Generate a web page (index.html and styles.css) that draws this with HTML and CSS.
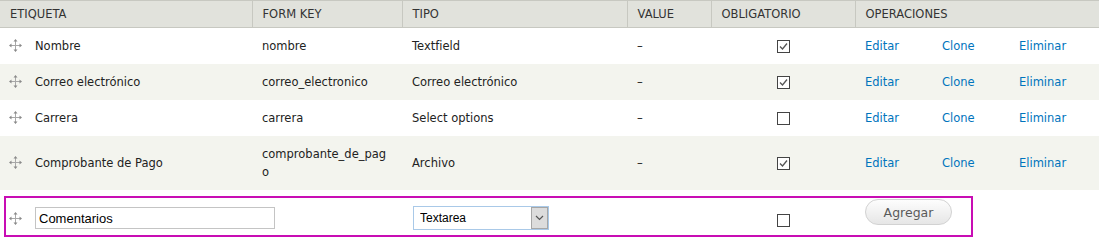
FILE: index.html
```html
<!DOCTYPE html>
<html lang="es">
<head>
<meta charset="utf-8">
<title>Campos del formulario</title>
<link rel="stylesheet" href="styles.css">
</head>
<body>
<div class="page">
  <table class="fields">
    <colgroup>
      <col class="c-label"><col class="c-key"><col class="c-type"><col class="c-value"><col class="c-req"><col class="c-ops">
    </colgroup>
    <thead>
      <tr><th>Etiqueta</th><th>Form key</th><th>Tipo</th><th>Value</th><th>Obligatorio</th><th>Operaciones</th></tr>
    </thead>
    <tbody>
      <tr class="odd">
        <td><span class="handle"><svg width="13" height="13" viewBox="0 0 13 13"><path d="M6.5 2V11M2 6.5H11" stroke="#a8a8a8" stroke-width="1"/><path d="M6.5 0L4.5 2.5H8.5ZM6.5 13L4.5 10.5H8.5ZM0 6.5L2.5 4.5V8.5ZM13 6.5L10.5 4.5V8.5Z" fill="#8a8a8a"/></svg></span>Nombre</td>
        <td class="key">nombre</td>
        <td>Textfield</td>
        <td>–</td>
        <td class="req"><span class="cb"><svg width="11" height="11" viewBox="0 0 11 11"><path d="M2 5.5L4.5 8L9 2.5" fill="none" stroke="#555" stroke-width="1.3"/></svg></span></td>
        <td><div class="ops"><a href="#">Editar</a><a href="#">Clone</a><a href="#">Eliminar</a></div></td>
      </tr>
      <tr class="even">
        <td><span class="handle"><svg width="13" height="13" viewBox="0 0 13 13"><path d="M6.5 2V11M2 6.5H11" stroke="#a8a8a8" stroke-width="1"/><path d="M6.5 0L4.5 2.5H8.5ZM6.5 13L4.5 10.5H8.5ZM0 6.5L2.5 4.5V8.5ZM13 6.5L10.5 4.5V8.5Z" fill="#8a8a8a"/></svg></span>Correo electrónico</td>
        <td class="key">correo_electronico</td>
        <td>Correo electrónico</td>
        <td>–</td>
        <td class="req"><span class="cb"><svg width="11" height="11" viewBox="0 0 11 11"><path d="M2 5.5L4.5 8L9 2.5" fill="none" stroke="#555" stroke-width="1.3"/></svg></span></td>
        <td><div class="ops"><a href="#">Editar</a><a href="#">Clone</a><a href="#">Eliminar</a></div></td>
      </tr>
      <tr class="odd">
        <td><span class="handle"><svg width="13" height="13" viewBox="0 0 13 13"><path d="M6.5 2V11M2 6.5H11" stroke="#a8a8a8" stroke-width="1"/><path d="M6.5 0L4.5 2.5H8.5ZM6.5 13L4.5 10.5H8.5ZM0 6.5L2.5 4.5V8.5ZM13 6.5L10.5 4.5V8.5Z" fill="#8a8a8a"/></svg></span>Carrera</td>
        <td class="key">carrera</td>
        <td>Select options</td>
        <td>–</td>
        <td class="req"><span class="cb"></span></td>
        <td><div class="ops"><a href="#">Editar</a><a href="#">Clone</a><a href="#">Eliminar</a></div></td>
      </tr>
      <tr class="even">
        <td><span class="handle"><svg width="13" height="13" viewBox="0 0 13 13"><path d="M6.5 2V11M2 6.5H11" stroke="#a8a8a8" stroke-width="1"/><path d="M6.5 0L4.5 2.5H8.5ZM6.5 13L4.5 10.5H8.5ZM0 6.5L2.5 4.5V8.5ZM13 6.5L10.5 4.5V8.5Z" fill="#8a8a8a"/></svg></span>Comprobante de Pago</td>
        <td class="key">comprobante_de_pago</td>
        <td>Archivo</td>
        <td>–</td>
        <td class="req"><span class="cb"><svg width="11" height="11" viewBox="0 0 11 11"><path d="M2 5.5L4.5 8L9 2.5" fill="none" stroke="#555" stroke-width="1.3"/></svg></span></td>
        <td><div class="ops"><a href="#">Editar</a><a href="#">Clone</a><a href="#">Eliminar</a></div></td>
      </tr>
      <tr class="add">
        <td class="add-label"><div class="add-flex"><span class="handle"><svg width="13" height="13" viewBox="0 0 13 13"><path d="M6.5 2V11M2 6.5H11" stroke="#a8a8a8" stroke-width="1"/><path d="M6.5 0L4.5 2.5H8.5ZM6.5 13L4.5 10.5H8.5ZM0 6.5L2.5 4.5V8.5ZM13 6.5L10.5 4.5V8.5Z" fill="#8a8a8a"/></svg></span><input class="text-input" type="text" value="Comentarios"></div></td>
        <td class="add-key"></td>
        <td class="add-type"><div class="select-wrap"><select class="select"><option>Textarea</option></select><span class="select-btn"><svg width="9" height="6" viewBox="0 0 9 6"><path d="M1 1L4.5 4.5L8 1" fill="none" stroke="#555" stroke-width="1.2"/></svg></span></div></td>
        <td class="add-value"></td>
        <td class="req add-req"><span class="cb"></span></td>
        <td class="add-ops"><button class="btn" type="button">Agregar</button></td>
      </tr>
    </tbody>
  </table>
  <div class="highlight"></div>
</div>
</body>
</html>
```
FILE: styles.css
```css
html, body {
  margin: 0;
  padding: 0;
  background: #fff;
}

.page {
  position: relative;
  width: 1099px;
  font-family: "DejaVu Sans", Verdana, sans-serif;
  color: #333;
}

.fields {
  width: 1099px;
  border-collapse: collapse;
  table-layout: fixed;
  font-size: 11.5px;
  line-height: 18px;
}

.c-label { width: 252px; }
.c-key { width: 150px; }
.c-type { width: 225px; }
.c-value { width: 84px; }
.c-req { width: 144px; }
.c-ops { width: 244px; }

.fields th {
  background: #e1e2dc;
  border-top: 1px solid #c7c8c1;
  border-bottom: 1px solid #c7c8c1;
  border-left: 1px solid #c7c8c1;
  padding: 4px 10px;
  text-align: left;
  font-weight: normal;
  text-transform: uppercase;
  color: #333;
}

.fields th:first-child {
  border-left: none;
}

.fields td {
  padding: 9px 10px;
  vertical-align: middle;
  color: #222;
}

.fields tr.even td {
  background: #f3f4ee;
}

.key {
  word-break: break-all;
}

.handle {
  display: inline-block;
  flex: none;
  width: 13px;
  height: 13px;
  margin-left: -1px;
  margin-right: 13px;
  vertical-align: -2px;
}

.handle svg {
  display: block;
}

.req {
  text-align: center;
}

.cb {
  display: inline-block;
  width: 11px;
  height: 11px;
  border: 1px solid #444;
  background: #fff;
  vertical-align: middle;
}

.cb svg {
  display: block;
}

.ops {
  display: flex;
}

.ops a {
  width: 77px;
  flex: none;
  color: #0074bd;
  text-decoration: none;
}

/* add row */
.fields tr.add td {
  vertical-align: top;
  padding: 16px 10px 14px;
}

.fields tr.add td.add-label {
  padding-top: 17px;
}

.add-flex {
  display: flex;
  align-items: center;
}

.add-flex .handle {
  margin-right: 13px;
  vertical-align: baseline;
}

.text-input {
  flex: none;
  box-sizing: border-box;
  width: 240px;
  height: 22px;
  margin: 0;
  padding: 0 3px;
  border: 1px solid #c4c4c4;
  font-family: "Liberation Sans", Arial, sans-serif;
  font-size: 13px;
  color: #000;
  background: #fff;
  outline: none;
}

.select-wrap {
  display: inline-flex;
  box-sizing: border-box;
  width: 136px;
  height: 24px;
  margin-left: 1px;
  border: 1px solid #a9c9e8;
  background: #fff;
}

.select {
  flex: 1;
  min-width: 0;
  -webkit-appearance: none;
  appearance: none;
  border: none;
  background: transparent;
  margin: 0;
  padding: 0 0 0 6px;
  font-family: "Liberation Sans", Arial, sans-serif;
  font-size: 12px;
  color: #000;
  outline: none;
}

.select-btn {
  box-sizing: border-box;
  width: 17px;
  flex: none;
  display: flex;
  align-items: center;
  justify-content: center;
  background: #dcdcdc;
  border: 1px solid #a6a6a6;
}

.select-btn svg {
  display: block;
}

.fields tr.add td.add-req {
  padding-top: 21px;
}

.fields tr.add td.add-ops {
  padding-top: 9px;
}

.btn {
  box-sizing: border-box;
  width: 87px;
  height: 26px;
  margin: 0;
  padding: 0;
  border: 1px solid #d2d2d2;
  border-radius: 13px;
  background: linear-gradient(#fdfdfd, #e6e6e6);
  font-family: "DejaVu Sans", Verdana, sans-serif;
  font-size: 12.5px;
  color: #5a5a5a;
}

.highlight {
  position: absolute;
  left: 4px;
  top: 196px;
  width: 969px;
  height: 41px;
  box-sizing: border-box;
  border: 2px solid #c80db4;
  pointer-events: none;
}
```
